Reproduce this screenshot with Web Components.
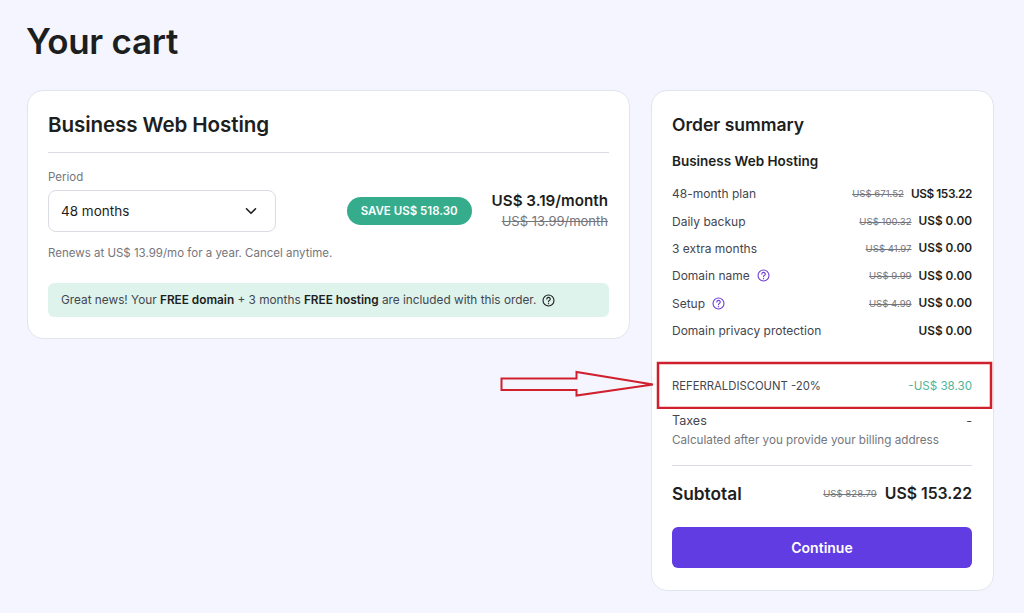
<!DOCTYPE html>
<html lang="en">
<head>
<meta charset="utf-8">
<title>Your cart</title>
<style>
  html, body { margin: 0; height: 613px; overflow: hidden; }
  body { background: #f4f5ff; color: #1d1e20; font-family: "Inter", "Liberation Sans", sans-serif; }
</style>
</head>
<body>
<cart-page>
  <hosting-card slot="left"></hosting-card>
  <order-summary slot="right"></order-summary>
</cart-page>

<script>
const helpIcon = (color, size) => `
  <svg width="${size}" height="${size}" viewBox="0 0 14 14" fill="none" stroke="${color}" stroke-width="1.2" stroke-linecap="round" style="flex:none">
    <circle cx="7" cy="7" r="5.9"/>
    <path d="M5.2 5.5a1.85 1.85 0 1 1 2.7 1.6c-.6.35-.9.7-.9 1.3"/>
    <path d="M7 10.3v.1" stroke-width="1.4"/>
  </svg>`;

class CartPage extends HTMLElement {
    connectedCallback() {
        this.attachShadow({ mode: 'open' });
        this.shadowRoot.innerHTML = `
            <style>
                :host { display: block; position: relative; height: 613px; box-sizing: border-box; padding: 0 30px 0 27px; }
                h1 { margin: 0 0 0 -1px; padding-top: 22px; height: 90px; box-sizing: border-box; font-size: 35px; line-height: 38px; font-weight: 600; letter-spacing: -0.3px; }
                .columns { display: grid; grid-template-columns: 603px 343px; column-gap: 21px; align-items: start; }
                .annotation { position: absolute; left: 500px; top: 361px; }
            </style>
            <h1>Your cart</h1>
            <div class="columns">
                <slot name="left"></slot>
                <slot name="right"></slot>
            </div>
            <svg class="annotation" width="493" height="48" viewBox="0 0 493 48" fill="none" stroke="#d0202e" stroke-width="2.5">
                <rect x="158" y="2" width="333" height="45"/>
                <path d="M1.5 17.5H76.5V11L153 23.5 76.5 34.5V29H1.5Z" stroke-width="2"/>
            </svg>
        `;
    }
}

class HostingCard extends HTMLElement {
    connectedCallback() {
        this.attachShadow({ mode: 'open' });
        this.shadowRoot.innerHTML = `
            <style>
                :host { display: block; box-sizing: border-box; height: 249px; background: #fff; border: 1px solid #e3e5ee; border-radius: 16px; padding: 20px 20px 0; }
                h2 { margin: 0; font-size: 20.6px; line-height: 27px; font-weight: 600; letter-spacing: -0.1px; padding-bottom: 14px; border-bottom: 1px solid #dadce4; }
                .label { font-size: 11.5px; line-height: 16px; color: #75767c; margin-top: 16px; }
                .period { display: flex; align-items: center; margin-top: 5px; }
                .select { width: 228px; height: 42px; box-sizing: border-box; border: 1px solid #dadce4; border-radius: 8px; display: flex; align-items: center; justify-content: space-between; padding: 0 17px 0 12px; font-size: 13.5px; color: #1d1e20; }
                .badge { margin-left: auto; width: 125px; height: 28px; border-radius: 14px; background: #35ad8c; color: #fff; font-size: 11.5px; font-weight: 600; display: flex; align-items: center; justify-content: center; white-space: nowrap; }
                .price { margin: 0 1px 0 20px; text-align: right; white-space: nowrap; }
                .now { font-size: 15.2px; line-height: 20px; font-weight: 600; }
                .was { font-size: 13px; line-height: 20px; color: #75767c; text-decoration: line-through; }
                .renew { font-size: 11.5px; line-height: 16px; color: #75767c; margin-top: 13px; }
                .note { margin-top: 22px; height: 34px; border-radius: 6px; background: #def3ec; display: flex; align-items: center; padding-left: 13px; font-size: 11.8px; color: #44464f; white-space: pre; }
                .note b { font-weight: 600; color: #1d1e20; }
                .note svg { margin-left: 6px; }
            </style>
            <h2>Business Web Hosting</h2>
            <div class="label">Period</div>
            <div class="period">
                <div class="select">
                    <span>48 months</span>
                    <svg width="14" height="14" viewBox="0 0 14 14" fill="none" stroke="#1d1e20" stroke-width="1.6" stroke-linecap="round" stroke-linejoin="round"><path d="M2.5 4.8 7 9.3l4.5-4.5"/></svg>
                </div>
                <div class="badge">SAVE US$ 518.30</div>
                <div class="price">
                    <div class="now">US$ 3.19/month</div>
                    <div class="was">US$ 13.99/month</div>
                </div>
            </div>
            <div class="renew">Renews at US$ 13.99/mo for a year. Cancel anytime.</div>
            <div class="note"><span>Great news! Your <b>FREE domain</b> + 3 months <b>FREE hosting</b> are included with this order.</span>${helpIcon('#1d1e20', 13)}</div>
        `;
    }
}

class SummaryRow extends HTMLElement {
    connectedCallback() {
        const was = this.getAttribute('was');
        this.attachShadow({ mode: 'open' });
        this.shadowRoot.innerHTML = `
            <style>
                :host { display: flex; align-items: center; height: 27.4px; font-size: 12px; color: #44464f; white-space: nowrap; }
                .name { display: flex; align-items: center; gap: 7px; }
                .was { margin-left: auto; font-size: 9.6px; color: #75767c; text-decoration: line-through; }
                .now { margin-left: 7px; font-weight: 600; color: #1d1e20; font-size: 11.8px; }
                .tight { letter-spacing: -0.4px; }
                .only { margin-left: auto; }
            </style>
            <span class="name"><slot></slot>${this.hasAttribute('help') ? helpIcon('#6d3fd6', 13) : ''}</span>
            ${was ? `<span class="was">${was}</span>` : ''}
            <span class="now ${was ? '' : 'only'} ${this.hasAttribute('tight') ? 'tight' : ''}">${this.getAttribute('now')}</span>
        `;
    }
}

class OrderSummary extends HTMLElement {
    connectedCallback() {
        this.attachShadow({ mode: 'open' });
        this.shadowRoot.innerHTML = `
            <style>
                :host { display: block; box-sizing: border-box; height: 501px; background: #fff; border: 1px solid #e3e5ee; border-radius: 16px; padding: 23px 21px 0 20px; }
                h2 { margin: 0; font-size: 17.5px; line-height: 22px; font-weight: 600; }
                h3 { margin: 17px 0 10px; font-size: 13.5px; line-height: 17px; font-weight: 600; }
                .discount { display: flex; justify-content: space-between; align-items: center; margin-top: 28px; height: 27px; font-size: 11.3px; color: #44464f; }
                .discount span:last-child { color: #4fb596; font-size: 11.6px; }
                .taxes { display: flex; justify-content: space-between; margin-top: 13px; font-size: 12.6px; line-height: 17px; color: #44464f; }
                .calc { font-size: 11.7px; line-height: 16px; color: #75767c; margin-top: 3px; padding-bottom: 17px; border-bottom: 1px solid #dadce4; }
                .subtotal { display: flex; align-items: center; height: 54px; font-weight: 600; }
                .subtotal .name { font-size: 17.3px; }
                .subtotal .was { margin-left: auto; font-size: 9.6px; font-weight: 400; color: #75767c; text-decoration: line-through; }
                .subtotal .now { margin-left: 8px; font-size: 15.8px; }
                .continue { display: flex; align-items: center; justify-content: center; height: 41px; margin-top: 7px; background: #613ce2; color: #fff; border-radius: 6px; font-size: 14px; font-weight: 600; }
            </style>
            <h2>Order summary</h2>
            <h3>Business Web Hosting</h3>
            <summary-row was="US$ 671.52" now="US$ 153.22" tight>48-month plan</summary-row>
            <summary-row was="US$ 100.32" now="US$ 0.00">Daily backup</summary-row>
            <summary-row was="US$ 41.97" now="US$ 0.00">3 extra months</summary-row>
            <summary-row was="US$ 9.99" now="US$ 0.00" help>Domain name</summary-row>
            <summary-row was="US$ 4.99" now="US$ 0.00" help>Setup</summary-row>
            <summary-row now="US$ 0.00">Domain privacy protection</summary-row>
            <div class="discount"><span>REFERRALDISCOUNT -20%</span><span>-US$ 38.30</span></div>
            <div class="taxes"><span>Taxes</span><span>-</span></div>
            <div class="calc">Calculated after you provide your billing address</div>
            <div class="subtotal">
                <span class="name">Subtotal</span>
                <span class="was">US$ 828.79</span>
                <span class="now">US$ 153.22</span>
            </div>
            <div class="continue">Continue</div>
        `;
    }
}

customElements.define('cart-page', CartPage);
customElements.define('hosting-card', HostingCard);
customElements.define('summary-row', SummaryRow);
customElements.define('order-summary', OrderSummary);
</script>
</body>
</html>
